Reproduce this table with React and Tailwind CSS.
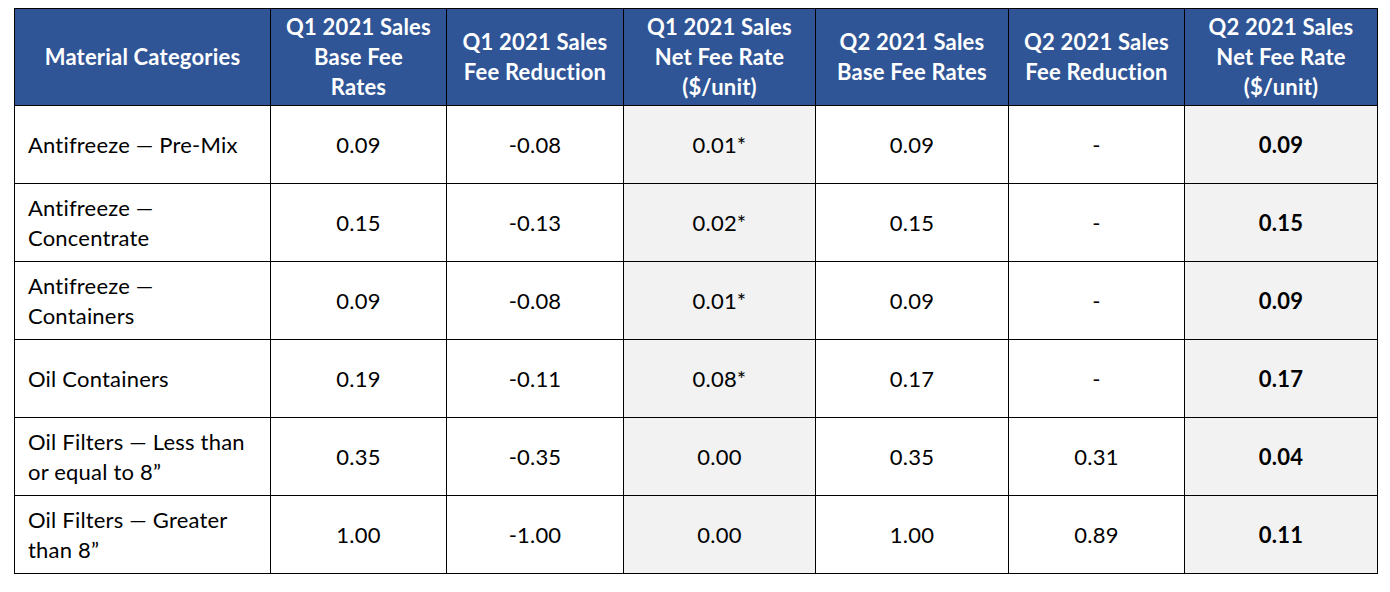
const rows = [
  [["Antifreeze — Pre-Mix"], "0.09", "-0.08", "0.01*", "0.09", "-", "0.09"],
  [["Antifreeze —", "Concentrate"], "0.15", "-0.13", "0.02*", "0.15", "-", "0.15"],
  [["Antifreeze —", "Containers"], "0.09", "-0.08", "0.01*", "0.09", "-", "0.09"],
  [["Oil Containers"], "0.19", "-0.11", "0.08*", "0.17", "-", "0.17"],
  [["Oil Filters — Less than", "or equal to 8”"], "0.35", "-0.35", "0.00", "0.35", "0.31", "0.04"],
  [["Oil Filters — Greater", "than 8”"], "1.00", "-1.00", "0.00", "1.00", "0.89", "0.11"],
];

const heads = [
  ["Material Categories"],
  ["Q1 2021 Sales", "Base Fee", "Rates"],
  ["Q1 2021 Sales", "Fee Reduction"],
  ["Q1 2021 Sales", "Net Fee Rate", "($/unit)"],
  ["Q2 2021 Sales", "Base Fee Rates"],
  ["Q2 2021 Sales", "Fee Reduction"],
  ["Q2 2021 Sales", "Net Fee Rate", "($/unit)"],
];

const widths = [256, 176, 177, 192, 193, 176, 193];

const Lines = ({ lines }) =>
  lines.map((l, i) => (
    <span key={i} className="block whitespace-nowrap">
      {l}
    </span>
  ));

export default function App() {
  return (
    <div className="w-[1390px] h-[592px] bg-white pl-[14px] pt-[8px] font-['Lato',sans-serif]">
      <table className="table-fixed border-collapse w-[1364px] text-[22px] leading-[30px] tracking-[0.2px] text-black">
        <colgroup>
          {widths.map((w, i) => (
            <col key={i} style={{ width: w }} />
          ))}
        </colgroup>
        <thead>
          <tr className="h-[97px] bg-[#2f5597] text-white">
            {heads.map((h, i) => (
              <th key={i} className="border border-black px-1 text-center font-bold">
                <Lines lines={h} />
              </th>
            ))}
          </tr>
        </thead>
        <tbody>
          {rows.map((r, ri) => (
            <tr key={ri} className="h-[78px]">
              {r.map((c, ci) => (
                <td
                  key={ci}
                  className={
                    "border border-black " +
                    (ci === 0 ? "text-left pl-[13px] pr-1 " : "text-center px-1 ") +
                    (ci === 3 || ci === 6 ? "bg-[#f2f2f2] " : "") +
                    (ci === 6 ? "font-bold" : "")
                  }
                >
                  {ci === 0 ? <Lines lines={c} /> : c}
                </td>
              ))}
            </tr>
          ))}
        </tbody>
      </table>
    </div>
  );
}
